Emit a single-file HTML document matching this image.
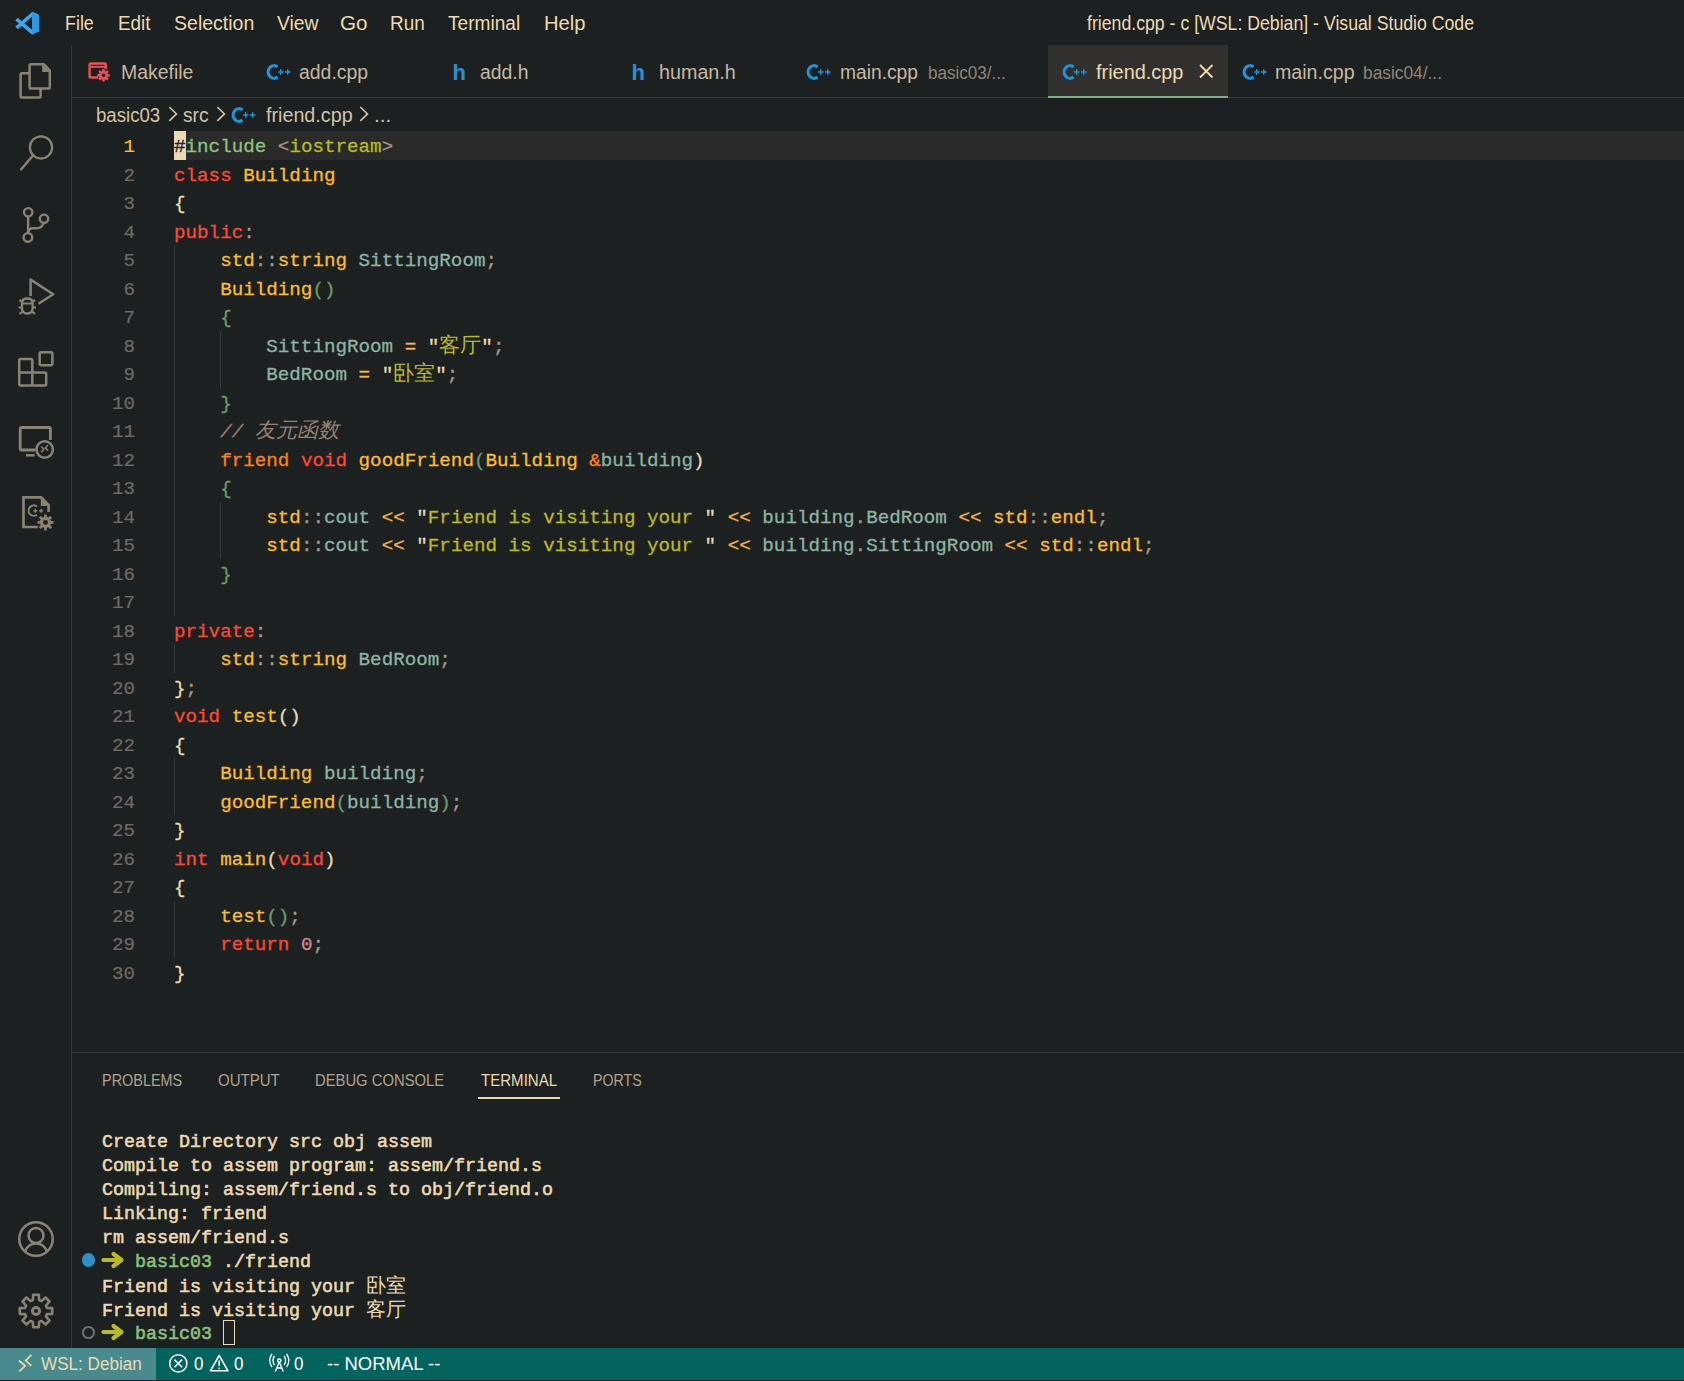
<!DOCTYPE html>
<html><head><meta charset="utf-8"><style>
html,body{margin:0;padding:0;}
body{width:1684px;height:1381px;overflow:hidden;background:#1d2021;position:relative;font-family:"Liberation Sans",sans-serif;color:#ebdbb2;}
.abs{position:absolute;}
.t{position:absolute;white-space:pre;line-height:1;}
.menu{font-size:19.5px;color:#ebdbb2;top:13px;}
.code{position:absolute;left:174px;-webkit-text-stroke:0.3px currentColor;font-family:"Liberation Mono",monospace;font-size:19.23px;white-space:pre;line-height:28.5px;height:28.5px;}
.cjk{font-size:21px;-webkit-text-stroke:0;}
.ln{position:absolute;width:80px;left:55px;-webkit-text-stroke:0.2px currentColor;text-align:right;font-family:"Liberation Mono",monospace;font-size:19.17px;line-height:28.5px;}
.term{position:absolute;left:102px;font-family:"Liberation Mono",monospace;font-size:18.33px;white-space:pre;line-height:24px;height:24px;color:#ebdbb2;font-weight:normal;-webkit-text-stroke:0.55px currentColor;}
.tab{position:absolute;top:45px;height:52px;}
.tabt{position:absolute;top:17px;font-size:19.5px;white-space:pre;line-height:1;color:#a89984;}
.ptab{position:absolute;top:1072px;font-size:16.5px;white-space:pre;line-height:1;color:#a89984;}
svg{position:absolute;overflow:visible;}
</style></head><body>
<div class="abs" style="left:71px;top:45px;width:1px;height:1303px;background:#333638"></div>
<div class="abs" style="left:72px;top:97px;width:1612px;height:1px;background:#3a3a3a"></div>
<div class="abs" style="left:72px;top:1052px;width:1612px;height:1px;background:#333638"></div>
<div class="abs" style="left:0;top:1348px;width:1684px;height:32px;background:#02635f"></div>
<div class="abs" style="left:0;top:1348px;width:156px;height:32px;background:#488a8e"></div>
<div class="abs" style="left:1048px;top:45px;width:180px;height:52px;background:#32302f"></div>
<div class="abs" style="left:1048px;top:96px;width:180px;height:2px;background:#83ae8a"></div>
<div class="abs" style="left:478px;top:1097px;width:82px;height:2px;background:#ebdbb2"></div>
<div class="t" style="left:64.71px;top:13px;font-size:20px;color:#ebdbb2;transform:scaleX(0.8935);transform-origin:0 0">File</div>
<div class="t" style="left:117.86px;top:13px;font-size:20px;color:#ebdbb2;transform:scaleX(0.9441);transform-origin:0 0">Edit</div>
<div class="t" style="left:173.52px;top:13px;font-size:20px;color:#ebdbb2;transform:scaleX(0.9762);transform-origin:0 0">Selection</div>
<div class="t" style="left:276.90px;top:13px;font-size:20px;color:#ebdbb2;transform:scaleX(0.9674);transform-origin:0 0">View</div>
<div class="t" style="left:340.27px;top:13px;font-size:20px;color:#ebdbb2;transform:scaleX(1.0320);transform-origin:0 0">Go</div>
<div class="t" style="left:390.05px;top:13px;font-size:20px;color:#ebdbb2;transform:scaleX(0.9486);transform-origin:0 0">Run</div>
<div class="t" style="left:448.40px;top:13px;font-size:20px;color:#ebdbb2;transform:scaleX(0.9547);transform-origin:0 0">Terminal</div>
<div class="t" style="left:543.99px;top:13px;font-size:20px;color:#ebdbb2;transform:scaleX(1.0100);transform-origin:0 0">Help</div>
<div class="t" style="left:1087.00px;top:13px;font-size:20px;color:#ebdbb2;transform:scaleX(0.8844);transform-origin:0 0">friend.cpp - c [WSL: Debian] - Visual Studio Code</div>
<div class="t" style="left:120.53px;top:62px;font-size:20px;color:#c5b9a2;transform:scaleX(0.9726);transform-origin:0 0">Makefile</div>
<div class="t" style="left:299.03px;top:62px;font-size:20px;color:#c5b9a2;transform:scaleX(0.9714);transform-origin:0 0">add.cpp</div>
<div class="t" style="left:479.53px;top:62px;font-size:20px;color:#c5b9a2;transform:scaleX(0.9688);transform-origin:0 0">add.h</div>
<div class="t" style="left:659.01px;top:62px;font-size:20px;color:#c5b9a2;transform:scaleX(0.9868);transform-origin:0 0">human.h</div>
<div class="t" style="left:840.44px;top:62px;font-size:20px;color:#c5b9a2;transform:scaleX(0.9612);transform-origin:0 0">main.cpp</div>
<div class="t" style="left:927.55px;top:64px;font-size:18px;color:#8f8678;transform:scaleX(0.9475);transform-origin:0 0">basic03/...</div>
<div class="t" style="left:1096.00px;top:62px;font-size:20px;color:#ebdbb2;transform:scaleX(0.9954);transform-origin:0 0">friend.cpp</div>
<div class="t" style="left:1275.02px;top:62px;font-size:20px;color:#c5b9a2;transform:scaleX(0.9800);transform-origin:0 0">main.cpp</div>
<div class="t" style="left:1363.04px;top:64px;font-size:18px;color:#8f8678;transform:scaleX(0.9625);transform-origin:0 0">basic04/...</div>
<div class="t" style="left:96.47px;top:105px;font-size:20px;color:#d0c3a6;transform:scaleX(0.9313);transform-origin:0 0">basic03</div>
<div class="t" style="left:183.04px;top:105px;font-size:20px;color:#d0c3a6;transform:scaleX(0.9600);transform-origin:0 0">src</div>
<div class="t" style="left:265.80px;top:105px;font-size:20px;color:#d0c3a6;transform:scaleX(0.9862);transform-origin:0 0">friend.cpp</div>
<div class="t" style="left:373.92px;top:105px;font-size:20px;color:#d0c3a6;transform:scaleX(1.0385);transform-origin:0 0">...</div>
<div class="t" style="left:102.45px;top:1072px;font-size:17px;color:#b0a48e;transform:scaleX(0.8495);transform-origin:0 0">PROBLEMS</div>
<div class="t" style="left:217.62px;top:1072px;font-size:17px;color:#b0a48e;transform:scaleX(0.8841);transform-origin:0 0">OUTPUT</div>
<div class="t" style="left:315.13px;top:1072px;font-size:17px;color:#b0a48e;transform:scaleX(0.8707);transform-origin:0 0">DEBUG CONSOLE</div>
<div class="t" style="left:480.80px;top:1072px;font-size:17px;color:#ebdbb2;transform:scaleX(0.8860);transform-origin:0 0">TERMINAL</div>
<div class="t" style="left:592.86px;top:1072px;font-size:17px;color:#b0a48e;transform:scaleX(0.8351);transform-origin:0 0">PORTS</div>
<div class="t" style="left:41.00px;top:1355px;font-size:18px;color:#ebdbb2;transform:scaleX(0.9495);transform-origin:0 0">WSL: Debian</div>
<div class="t" style="left:193.76px;top:1355px;font-size:18px;color:#ffffff;transform:scaleX(0.9444);transform-origin:0 0">0</div>
<div class="t" style="left:234.26px;top:1355px;font-size:18px;color:#ffffff;transform:scaleX(0.9444);transform-origin:0 0">0</div>
<div class="t" style="left:293.96px;top:1355px;font-size:18px;color:#ffffff;transform:scaleX(0.9444);transform-origin:0 0">0</div>
<div class="t" style="left:326.97px;top:1355px;font-size:18px;color:#ffffff;transform:scaleX(1.0275);transform-origin:0 0">-- NORMAL --</div>
<div class="abs" style="left:174px;top:131px;width:1510px;height:29px;background:#2a2a2a"></div>
<div class="abs" style="left:174.0px;top:245.0px;width:1px;height:370.5px;background:#333638"></div>
<div class="abs" style="left:174.0px;top:644.0px;width:1px;height:28.5px;background:#333638"></div>
<div class="abs" style="left:174.0px;top:758.0px;width:1px;height:57.0px;background:#333638"></div>
<div class="abs" style="left:174.0px;top:900.5px;width:1px;height:57.0px;background:#333638"></div>
<div class="abs" style="left:220.0px;top:330.5px;width:1px;height:57.0px;background:#333638"></div>
<div class="abs" style="left:220.0px;top:501.5px;width:1px;height:57.0px;background:#333638"></div>
<div class="abs" style="left:174px;top:131px;width:12px;height:29px;background:#ebdbb2"></div>
<div class="ln" style="top:133.0px;color:#fabd2f">1</div>
<div class="code" style="top:133.0px"><span style="color:#1d2041">#</span><span style="color:#8ec07c">include</span><span style="color:#ebdbb2"> </span><span style="color:#a89984">&lt;</span><span style="color:#b8bb26">iostream</span><span style="color:#a89984">&gt;</span></div>
<div class="ln" style="top:161.5px;color:#6f6a62">2</div>
<div class="code" style="top:161.5px"><span style="color:#fb4934">class</span><span style="color:#ebdbb2"> </span><span style="color:#fabd2f">Building</span></div>
<div class="ln" style="top:190.0px;color:#6f6a62">3</div>
<div class="code" style="top:190.0px"><span style="color:#ebdbb2">{</span></div>
<div class="ln" style="top:218.5px;color:#6f6a62">4</div>
<div class="code" style="top:218.5px"><span style="color:#fb4934">public</span><span style="color:#a89984">:</span></div>
<div class="ln" style="top:247.0px;color:#6f6a62">5</div>
<div class="code" style="top:247.0px"><span style="color:#ebdbb2">    </span><span style="color:#fabd2f">std</span><span style="color:#a89984">::</span><span style="color:#fabd2f">string</span><span style="color:#ebdbb2"> </span><span style="color:#8db4a4">SittingRoom</span><span style="color:#a89984">;</span></div>
<div class="ln" style="top:275.5px;color:#6f6a62">6</div>
<div class="code" style="top:275.5px"><span style="color:#ebdbb2">    </span><span style="color:#fabd2f">Building</span><span style="color:#689d6a">()</span></div>
<div class="ln" style="top:304.0px;color:#6f6a62">7</div>
<div class="code" style="top:304.0px"><span style="color:#ebdbb2">    </span><span style="color:#689d6a">{</span></div>
<div class="ln" style="top:332.5px;color:#6f6a62">8</div>
<div class="code" style="top:332.5px"><span style="color:#ebdbb2">        </span><span style="color:#8db4a4">SittingRoom</span><span style="color:#ebdbb2"> </span><span style="color:#f5b548">=</span><span style="color:#ebdbb2"> </span><span style="color:#ebdbb2">&quot;</span><span class="cjk" style="color:#b8bb26">客厅</span><span style="color:#ebdbb2">&quot;</span><span style="color:#a89984">;</span></div>
<div class="ln" style="top:361.0px;color:#6f6a62">9</div>
<div class="code" style="top:361.0px"><span style="color:#ebdbb2">        </span><span style="color:#8db4a4">BedRoom</span><span style="color:#ebdbb2"> </span><span style="color:#f5b548">=</span><span style="color:#ebdbb2"> </span><span style="color:#ebdbb2">&quot;</span><span class="cjk" style="color:#b8bb26">卧室</span><span style="color:#ebdbb2">&quot;</span><span style="color:#a89984">;</span></div>
<div class="ln" style="top:389.5px;color:#6f6a62">10</div>
<div class="code" style="top:389.5px"><span style="color:#ebdbb2">    </span><span style="color:#689d6a">}</span></div>
<div class="ln" style="top:418.0px;color:#6f6a62">11</div>
<div class="code" style="top:418.0px"><span style="color:#ebdbb2">    </span><span style="color:#928374;font-style:italic">// </span><span class="cjk" style="color:#928374;font-style:italic">友元函数</span></div>
<div class="ln" style="top:446.5px;color:#6f6a62">12</div>
<div class="code" style="top:446.5px"><span style="color:#ebdbb2">    </span><span style="color:#fe8019">friend</span><span style="color:#ebdbb2"> </span><span style="color:#fb4934">void</span><span style="color:#ebdbb2"> </span><span style="color:#fabd2f">goodFriend</span><span style="color:#689d6a">(</span><span style="color:#fabd2f">Building</span><span style="color:#ebdbb2"> </span><span style="color:#fe8019">&amp;</span><span style="color:#8db4a4">building</span><span style="color:#ebdbb2">)</span></div>
<div class="ln" style="top:475.0px;color:#6f6a62">13</div>
<div class="code" style="top:475.0px"><span style="color:#ebdbb2">    </span><span style="color:#689d6a">{</span></div>
<div class="ln" style="top:503.5px;color:#6f6a62">14</div>
<div class="code" style="top:503.5px"><span style="color:#ebdbb2">        </span><span style="color:#fabd2f">std</span><span style="color:#a89984">::</span><span style="color:#8db4a4">cout</span><span style="color:#ebdbb2"> </span><span style="color:#f5b548">&lt;&lt;</span><span style="color:#ebdbb2"> </span><span style="color:#ebdbb2">&quot;</span><span style="color:#b8bb26">Friend is visiting your </span><span style="color:#ebdbb2">&quot;</span><span style="color:#ebdbb2"> </span><span style="color:#f5b548">&lt;&lt;</span><span style="color:#ebdbb2"> </span><span style="color:#8db4a4">building</span><span style="color:#a89984">.</span><span style="color:#8db4a4">BedRoom</span><span style="color:#ebdbb2"> </span><span style="color:#f5b548">&lt;&lt;</span><span style="color:#ebdbb2"> </span><span style="color:#fabd2f">std</span><span style="color:#a89984">::</span><span style="color:#fabd2f">endl</span><span style="color:#a89984">;</span></div>
<div class="ln" style="top:532.0px;color:#6f6a62">15</div>
<div class="code" style="top:532.0px"><span style="color:#ebdbb2">        </span><span style="color:#fabd2f">std</span><span style="color:#a89984">::</span><span style="color:#8db4a4">cout</span><span style="color:#ebdbb2"> </span><span style="color:#f5b548">&lt;&lt;</span><span style="color:#ebdbb2"> </span><span style="color:#ebdbb2">&quot;</span><span style="color:#b8bb26">Friend is visiting your </span><span style="color:#ebdbb2">&quot;</span><span style="color:#ebdbb2"> </span><span style="color:#f5b548">&lt;&lt;</span><span style="color:#ebdbb2"> </span><span style="color:#8db4a4">building</span><span style="color:#a89984">.</span><span style="color:#8db4a4">SittingRoom</span><span style="color:#ebdbb2"> </span><span style="color:#f5b548">&lt;&lt;</span><span style="color:#ebdbb2"> </span><span style="color:#fabd2f">std</span><span style="color:#a89984">::</span><span style="color:#fabd2f">endl</span><span style="color:#a89984">;</span></div>
<div class="ln" style="top:560.5px;color:#6f6a62">16</div>
<div class="code" style="top:560.5px"><span style="color:#ebdbb2">    </span><span style="color:#689d6a">}</span></div>
<div class="ln" style="top:589.0px;color:#6f6a62">17</div>
<div class="code" style="top:589.0px"></div>
<div class="ln" style="top:617.5px;color:#6f6a62">18</div>
<div class="code" style="top:617.5px"><span style="color:#fb4934">private</span><span style="color:#a89984">:</span></div>
<div class="ln" style="top:646.0px;color:#6f6a62">19</div>
<div class="code" style="top:646.0px"><span style="color:#ebdbb2">    </span><span style="color:#fabd2f">std</span><span style="color:#a89984">::</span><span style="color:#fabd2f">string</span><span style="color:#ebdbb2"> </span><span style="color:#8db4a4">BedRoom</span><span style="color:#a89984">;</span></div>
<div class="ln" style="top:674.5px;color:#6f6a62">20</div>
<div class="code" style="top:674.5px"><span style="color:#ebdbb2">}</span><span style="color:#a89984">;</span></div>
<div class="ln" style="top:703.0px;color:#6f6a62">21</div>
<div class="code" style="top:703.0px"><span style="color:#fb4934">void</span><span style="color:#ebdbb2"> </span><span style="color:#fabd2f">test</span><span style="color:#ebdbb2">()</span></div>
<div class="ln" style="top:731.5px;color:#6f6a62">22</div>
<div class="code" style="top:731.5px"><span style="color:#ebdbb2">{</span></div>
<div class="ln" style="top:760.0px;color:#6f6a62">23</div>
<div class="code" style="top:760.0px"><span style="color:#ebdbb2">    </span><span style="color:#fabd2f">Building</span><span style="color:#ebdbb2"> </span><span style="color:#8db4a4">building</span><span style="color:#a89984">;</span></div>
<div class="ln" style="top:788.5px;color:#6f6a62">24</div>
<div class="code" style="top:788.5px"><span style="color:#ebdbb2">    </span><span style="color:#fabd2f">goodFriend</span><span style="color:#689d6a">(</span><span style="color:#8db4a4">building</span><span style="color:#689d6a">)</span><span style="color:#a89984">;</span></div>
<div class="ln" style="top:817.0px;color:#6f6a62">25</div>
<div class="code" style="top:817.0px"><span style="color:#ebdbb2">}</span></div>
<div class="ln" style="top:845.5px;color:#6f6a62">26</div>
<div class="code" style="top:845.5px"><span style="color:#fb4934">int</span><span style="color:#ebdbb2"> </span><span style="color:#fabd2f">main</span><span style="color:#ebdbb2">(</span><span style="color:#fb4934">void</span><span style="color:#ebdbb2">)</span></div>
<div class="ln" style="top:874.0px;color:#6f6a62">27</div>
<div class="code" style="top:874.0px"><span style="color:#ebdbb2">{</span></div>
<div class="ln" style="top:902.5px;color:#6f6a62">28</div>
<div class="code" style="top:902.5px"><span style="color:#ebdbb2">    </span><span style="color:#fabd2f">test</span><span style="color:#689d6a">()</span><span style="color:#a89984">;</span></div>
<div class="ln" style="top:931.0px;color:#6f6a62">29</div>
<div class="code" style="top:931.0px"><span style="color:#ebdbb2">    </span><span style="color:#fb4934">return</span><span style="color:#ebdbb2"> </span><span style="color:#d3869b">0</span><span style="color:#a89984">;</span></div>
<div class="ln" style="top:959.5px;color:#6f6a62">30</div>
<div class="code" style="top:959.5px"><span style="color:#ebdbb2">}</span></div>
<div class="term" style="top:1130.5px"><span style="color:#ebdbb2">Create Directory src obj assem</span></div>
<div class="term" style="top:1154.5px"><span style="color:#ebdbb2">Compile to assem program: assem/friend.s</span></div>
<div class="term" style="top:1178.5px"><span style="color:#ebdbb2">Compiling: assem/friend.s to obj/friend.o</span></div>
<div class="term" style="top:1202.5px"><span style="color:#ebdbb2">Linking: friend</span></div>
<div class="term" style="top:1226.5px"><span style="color:#ebdbb2">rm assem/friend.s</span></div>
<div class="term" style="top:1250.5px"><span style="color:#ebdbb2">   </span><span style="color:#8ec07c">basic03</span><span style="color:#ebdbb2"> ./friend</span></div>
<div class="term" style="top:1274.5px"><span style="color:#ebdbb2">Friend is visiting your </span><span class="cjk" style="color:#ebdbb2;font-weight:normal;font-size:20px">卧室</span></div>
<div class="term" style="top:1298.5px"><span style="color:#ebdbb2">Friend is visiting your </span><span class="cjk" style="color:#ebdbb2;font-weight:normal;font-size:20px">客厅</span></div>
<div class="term" style="top:1322.5px"><span style="color:#ebdbb2">   </span><span style="color:#8ec07c">basic03</span><span style="color:#ebdbb2"> </span></div>
<div class="abs" style="left:81.5px;top:1253.3px;width:13.6px;height:13.6px;border-radius:50%;background:#2f8fc4"></div>
<div class="abs" style="left:82px;top:1326px;width:8.6px;height:8.6px;border-radius:50%;border:2.2px solid #6e6e6e;box-sizing:content-box"></div>
<div class="abs" style="left:223px;top:1320px;width:10px;height:23px;border:1.5px solid #ebdbb2"></div>
<svg style="left:0;top:0" width="1684" height="1381" viewBox="0 0 1684 1381"><path d="M44 64.3 H31 Q29.6 64.3 29.6 66 V87 Q29.6 88.6 31.2 88.6 H48.2 Q49.8 88.6 49.8 87 V70.5 Z" stroke="#8a8373" stroke-width="2.5" fill="none" stroke-linejoin="round"/><path d="M42.2 64.2 V72 H50.2 Z" fill="#8a8373"/><path d="M29.6 73.3 H22.2 Q20.6 73.3 20.6 75 V96 Q20.6 97.6 22.2 97.6 H39 Q40.6 97.6 40.6 96 V88.6" stroke="#8a8373" stroke-width="2.5" fill="none" stroke-linejoin="round"/><circle cx="41" cy="147.4" r="11.1" stroke="#8a8373" stroke-width="2.3" fill="none"/><path d="M33.2 155.3 L21.2 169.3" stroke="#8a8373" stroke-width="2.5" stroke-linecap="round"/><circle cx="28.2" cy="212.3" r="4.2" stroke="#8a8373" stroke-width="2.4" fill="none"/><circle cx="44" cy="218.8" r="4.2" stroke="#8a8373" stroke-width="2.4" fill="none"/><circle cx="27.9" cy="237.4" r="4.3" stroke="#8a8373" stroke-width="2.4" fill="none"/><path d="M28.1 216.5 V233" stroke="#8a8373" stroke-width="2.4"/><path d="M43.5 223 Q42 228.3 36 228.3 H33 Q28.5 228.3 28.1 233" stroke="#8a8373" stroke-width="2.4" fill="none"/><path d="M30.6 296 V279.6 L53.2 294.2 L38.4 303.8" stroke="#8a8373" stroke-width="2.5" fill="none" stroke-linejoin="round"/><path d="M22 303 Q22 298.5 27.3 298.5 Q32.6 298.5 32.6 303 V308 Q32.6 313.5 27.3 313.5 Q22 313.5 22 308 Z" stroke="#8a8373" stroke-width="2.3" fill="none"/><path d="M22 303.5 H32.6 M19.5 300 L22.5 302 M35 300 L32 302 M18.5 307.5 H22 M36 307.5 H32.6 M19.5 314 L22.5 311.5 M35 314 L32 311.5" stroke="#8a8373" stroke-width="2.2"/><rect x="39.7" y="352.3" width="12.7" height="13" rx="1.5" stroke="#8a8373" stroke-width="2.5" fill="none"/><path d="M32.3 372.4 V360.4 Q32.3 358.9 30.8 358.9 H20.7 Q19.2 358.9 19.2 360.4 V384.1 Q19.2 385.6 20.7 385.6 H44.7 Q46.2 385.6 46.2 384.1 V373.9 Q46.2 372.4 44.7 372.4 H19.2 M32.3 372.4 V385.6" stroke="#8a8373" stroke-width="2.5" fill="none"/><path d="M35.5 450 H21.7 Q20.2 450 20.2 448.5 V429 Q20.2 427.5 21.7 427.5 H48.9 Q50.4 427.5 50.4 429 V440" stroke="#8a8373" stroke-width="2.8" fill="none"/><path d="M26 455.3 H34.6" stroke="#8a8373" stroke-width="2.5"/><circle cx="44.7" cy="449.5" r="8.2" stroke="#8a8373" stroke-width="2.5" fill="none"/><path d="M41.2 446.5 L43.8 449.3 L41.2 452.2 M48 445 L45.4 447.8 L48 450.6" stroke="#8a8373" stroke-width="1.6" fill="none"/><path d="M44 517 V527 H23.5 V497.4 H41.2 L48.6 505 V512" stroke="#8a8373" stroke-width="2.7" fill="none"/><path d="M40.8 497 V506 H49.5 Z" fill="#8a8373"/><path d="M37 506.5 A5.2 5.2 0 1 0 37 514.8" stroke="#8a8373" stroke-width="2" fill="none"/><path d="M33.3 510.8 H37.3 M35.3 508.8 V512.8 M39.2 510.8 H43.2 M41.2 508.8 V512.8" stroke="#8a8373" stroke-width="1.5"/><path d="M43.49 516.53 L43.58 513.81 L47.42 513.81 L47.51 516.53 L48.23 516.83 L50.22 514.97 L52.93 517.68 L51.07 519.67 L51.37 520.39 L54.09 520.48 L54.09 524.32 L51.37 524.41 L51.07 525.13 L52.93 527.12 L50.22 529.83 L48.23 527.97 L47.51 528.27 L47.42 530.99 L43.58 530.99 L43.49 528.27 L42.77 527.97 L40.78 529.83 L38.07 527.12 L39.93 525.13 L39.63 524.41 L36.91 524.32 L36.91 520.48 L39.63 520.39 L39.93 519.67 L38.07 517.68 L40.78 514.97 L42.77 516.83 Z" fill="#8a8373" stroke="#1d2021" stroke-width="1.2"/><circle cx="45.5" cy="522.4" r="2.4" fill="#1d2021"/><circle cx="36" cy="1239" r="16.7" stroke="#8a8373" stroke-width="2.5" fill="none"/><circle cx="36" cy="1235.5" r="7.5" stroke="#8a8373" stroke-width="2.5" fill="none"/><path d="M25 1251.5 Q28 1243.5 36 1243.5 Q44 1243.5 47 1251.5" stroke="#8a8373" stroke-width="2.5" fill="none"/><path d="M32.85 1300.15 L33.16 1294.75 L38.84 1294.75 L39.15 1300.15 L41.44 1301.10 L45.49 1297.50 L49.50 1301.51 L45.90 1305.56 L46.85 1307.85 L52.25 1308.16 L52.25 1313.84 L46.85 1314.15 L45.90 1316.44 L49.50 1320.49 L45.49 1324.50 L41.44 1320.90 L39.15 1321.85 L38.84 1327.25 L33.16 1327.25 L32.85 1321.85 L30.56 1320.90 L26.51 1324.50 L22.50 1320.49 L26.10 1316.44 L25.15 1314.15 L19.75 1313.84 L19.75 1308.16 L25.15 1307.85 L26.10 1305.56 L22.50 1301.51 L26.51 1297.50 L30.56 1301.10 Z" stroke="#8a8373" stroke-width="2.6" fill="none" stroke-linejoin="round"/><circle cx="36" cy="1311" r="3.6" stroke="#8a8373" stroke-width="3" fill="none"/><path d="M16.5 19.2 L33 33 M16.5 27.8 L33 13.5" stroke="#3ca6f0" stroke-width="3.6"/><path d="M32 11.5 L39 14.6 V31.6 L32 34.8 Z" fill="#2f98e6"/><path d="M98 77.5 H90.5 Q89.6 77.5 89.6 76.5 V64.5 Q89.6 63.5 90.5 63.5 H104.8 Q105.8 63.5 105.8 64.5 V69" stroke="#e8515a" stroke-width="2.4" fill="none"/><path d="M90 66.8 H105.5" stroke="#e8515a" stroke-width="2"/><path d="M102.14 71.12 L102.27 69.12 L104.73 69.12 L104.86 71.12 L105.50 71.38 L107.00 70.06 L108.74 71.80 L107.42 73.30 L107.68 73.94 L109.68 74.07 L109.68 76.53 L107.68 76.66 L107.42 77.30 L108.74 78.80 L107.00 80.54 L105.50 79.22 L104.86 79.48 L104.73 81.48 L102.27 81.48 L102.14 79.48 L101.50 79.22 L100.00 80.54 L98.26 78.80 L99.58 77.30 L99.32 76.66 L97.32 76.53 L97.32 74.07 L99.32 73.94 L99.58 73.30 L98.26 71.80 L100.00 70.06 L101.50 71.38 Z" fill="#e8515a"/><circle cx="103.5" cy="75.3" r="1.8" fill="#1d2021"/><path d="M277.5 67 A5.8 6.3 0 1 0 277.5 77" stroke="#1d95dc" stroke-width="3.2" fill="none"/><path d="M278.0 72 H283.5 M280.75 69.25 V74.75 M285.0 72 H290.5 M287.75 69.25 V74.75" stroke="#1d95dc" stroke-width="1.5"/><path d="M817.5 67 A5.8 6.3 0 1 0 817.5 77" stroke="#1d95dc" stroke-width="3.2" fill="none"/><path d="M818.0 72 H823.5 M820.75 69.25 V74.75 M825.0 72 H830.5 M827.75 69.25 V74.75" stroke="#1d95dc" stroke-width="1.5"/><path d="M1073.5 67 A5.8 6.3 0 1 0 1073.5 77" stroke="#1d95dc" stroke-width="3.2" fill="none"/><path d="M1074.0 72 H1079.5 M1076.75 69.25 V74.75 M1081.0 72 H1086.5 M1083.75 69.25 V74.75" stroke="#1d95dc" stroke-width="1.5"/><path d="M1253.5 67 A5.8 6.3 0 1 0 1253.5 77" stroke="#1d95dc" stroke-width="3.2" fill="none"/><path d="M1254.0 72 H1259.5 M1256.75 69.25 V74.75 M1261.0 72 H1266.5 M1263.75 69.25 V74.75" stroke="#1d95dc" stroke-width="1.5"/><path d="M242.5 110 A5.8 6.3 0 1 0 242.5 120" stroke="#1d95dc" stroke-width="3.2" fill="none"/><path d="M243.0 115 H248.5 M245.75 112.25 V117.75 M250.0 115 H255.5 M252.75 112.25 V117.75" stroke="#1d95dc" stroke-width="1.5"/><text x="452.5" y="80" font-family="Liberation Sans" font-weight="bold" font-size="22" fill="#2d8fd5">h</text><text x="631.5" y="80" font-family="Liberation Sans" font-weight="bold" font-size="22" fill="#2d8fd5">h</text><path d="M1200 65 L1212.5 77.5 M1212.5 65 L1200 77.5" stroke="#ebdbb2" stroke-width="1.8"/><path d="M169.3 107 L176.5 113.9 L169.3 120.8" stroke="#d0c3a6" stroke-width="1.6" fill="none"/><path d="M217.3 107 L224.5 113.9 L217.3 120.8" stroke="#d0c3a6" stroke-width="1.6" fill="none"/><path d="M360.3 107 L367.5 113.9 L360.3 120.8" stroke="#d0c3a6" stroke-width="1.6" fill="none"/><path d="M19 1360.5 L25.2 1365.8 L19.3 1371.4 M31.4 1354.8 L25.7 1360.5 L31.4 1365.8" stroke="#ebdbb2" stroke-width="1.7" fill="none"/><circle cx="178.3" cy="1363.4" r="8.6" stroke="#ffffff" stroke-width="1.5" fill="none"/><path d="M174.5 1359.6 L182.1 1367.2 M182.1 1359.6 L174.5 1367.2" stroke="#ffffff" stroke-width="1.5"/><path d="M219.2 1355.5 L228 1370.8 H210.4 Z" stroke="#ffffff" stroke-width="1.6" fill="none" stroke-linejoin="round"/><path d="M219.2 1360.5 V1366" stroke="#ffffff" stroke-width="1.6"/><circle cx="219.2" cy="1368.3" r="0.9" fill="#ffffff"/><circle cx="279.3" cy="1360.6" r="1.6" stroke="#ffffff" stroke-width="1.4" fill="none"/><path d="M279.3 1362 L275.3 1371.5 M279.3 1362 L283.3 1371.5 M276.6 1368 H282" stroke="#ffffff" stroke-width="1.4"/><path d="M274.5 1356 Q271.5 1360.5 274.5 1365 M284.1 1356 Q287.1 1360.5 284.1 1365 M272 1354 Q267.5 1360.5 272 1367 M286.6 1354 Q291.1 1360.5 286.6 1367" stroke="#ffffff" stroke-width="1.4" fill="none"/><path d="M103.5 1260 H116" stroke="#b8bb26" stroke-width="4.2" stroke-linecap="round"/><path d="M113.5 1254 L121.5 1260 L113.5 1266" stroke="#b8bb26" stroke-width="4.2" fill="none" stroke-linecap="round" stroke-linejoin="round"/><path d="M103.5 1332 H116" stroke="#b8bb26" stroke-width="4.2" stroke-linecap="round"/><path d="M113.5 1326 L121.5 1332 L113.5 1338" stroke="#b8bb26" stroke-width="4.2" fill="none" stroke-linecap="round" stroke-linejoin="round"/></svg>
</body></html>
